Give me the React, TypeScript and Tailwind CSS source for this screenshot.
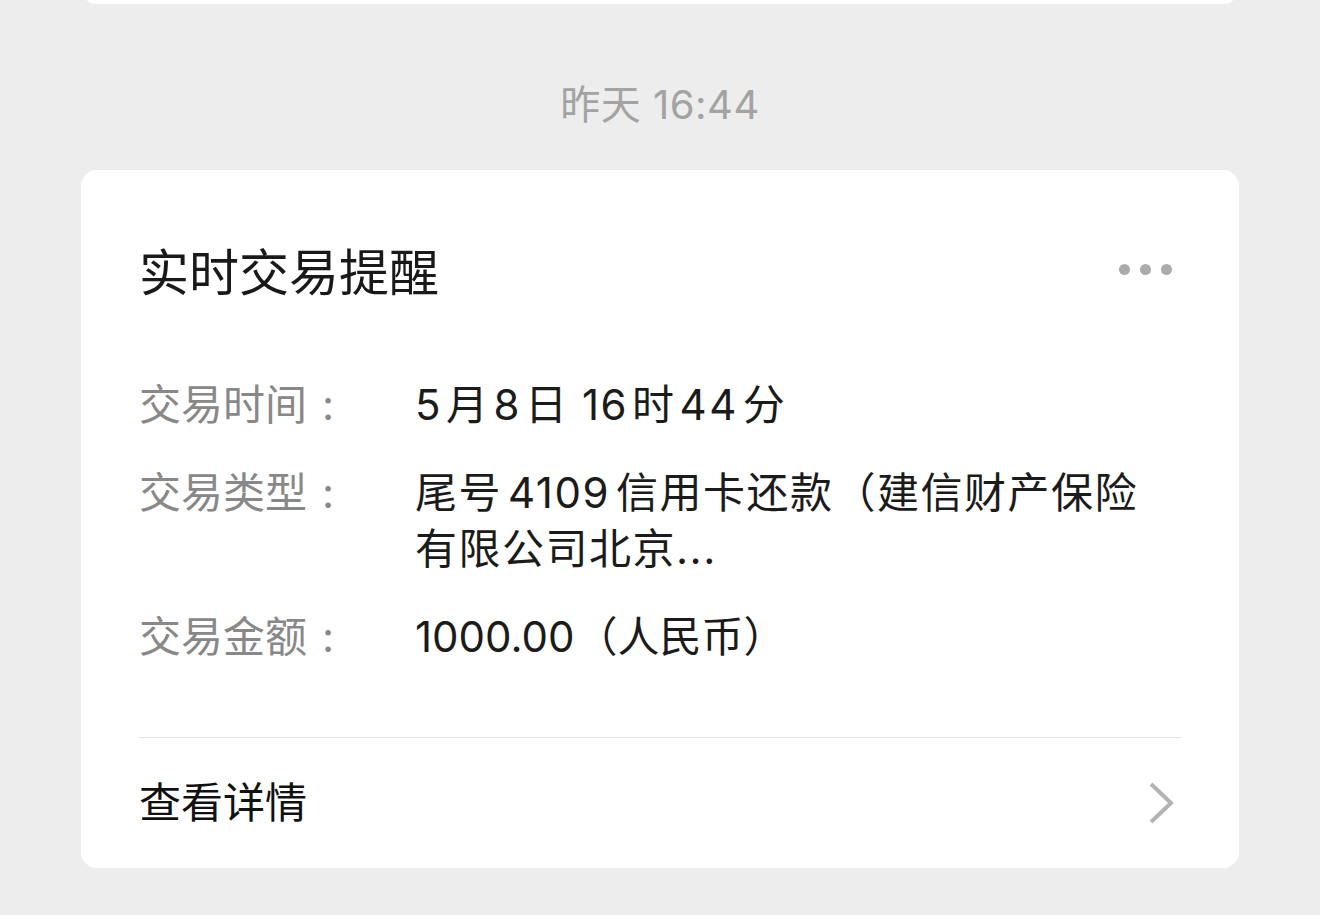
import React from "react";

export default function App() {
  const font = "font-['Inter','Noto_Sans_CJK_SC',sans-serif]";
  const Colon = () => <span className="ml-[15px]">:</span>;
  return (
    <div className={`w-[1320px] h-[915px] overflow-hidden bg-[#ededed] flex flex-col items-center ${font}`}>
      <div className="w-[1158px] h-[100px] -mt-[96px] shrink-0 bg-white rounded-[16px]" />
      <div className="mt-[76px] h-[50px] leading-[50px] text-[40px] tracking-[0.5px] text-[#a3a3a3]">昨天 16:44</div>
      <div className="mt-[40px] w-[1158px] shrink-0 bg-white rounded-[16px] px-[58px] pt-[68px]">
        <div className="h-[70px] flex items-center justify-between">
          <div className="text-[50px] leading-[70px] text-[#191919]">实时交易提醒</div>
          <div className="flex items-center gap-[10px] mr-[9px] mb-[8px]">
            <div className="w-[11px] h-[11px] rounded-full bg-[#ababab]" />
            <div className="w-[11px] h-[11px] rounded-full bg-[#ababab]" />
            <div className="w-[11px] h-[11px] rounded-full bg-[#ababab]" />
          </div>
        </div>
        <div className="mt-[69px] flex flex-col gap-[32px] text-[42px] leading-[56px]">
          <div className="flex">
            <div className="w-[276px] shrink-0 text-[#888888] whitespace-nowrap">交易时间<Colon /></div>
            <div className="text-[#1b1b1b] whitespace-nowrap tracking-[1.5px]">
              <span className="mr-[4px]">5</span>月<span className="mx-[4px]">8</span>日 <span className="mr-[4px]">16</span>时<span className="mx-[4px] tracking-[2.5px]">44</span>分
            </div>
          </div>
          <div className="flex">
            <div className="w-[276px] shrink-0 text-[#888888] whitespace-nowrap">交易类型<Colon /></div>
            <div className="text-[#1b1b1b] flex flex-col tracking-[1.5px]">
              <span className="whitespace-nowrap">尾号<span className="mx-[6px]">4109</span>信用卡还款（建信财产保险</span>
              <span className="whitespace-nowrap">有限公司北京...</span>
            </div>
          </div>
          <div className="flex">
            <div className="w-[276px] shrink-0 text-[#888888] whitespace-nowrap">交易金额<Colon /></div>
            <div className="text-[#1b1b1b] whitespace-nowrap">
              <span className="mr-[1px]">1000.00</span>（人民币）
            </div>
          </div>
        </div>
        <div className="mt-[72px] h-px bg-[#e5e5e5]" />
        <div className="h-[130px] flex items-center justify-between">
          <div className="text-[42px] leading-[56px] text-[#111111]">查看详情</div>
          <svg width="26" height="42" viewBox="0 0 26 42" className="mr-[6px]">
            <polyline points="2,2 22,21 2,40" fill="none" stroke="#b3b3b3" strokeWidth="4" />
          </svg>
        </div>
      </div>
    </div>
  );
}
